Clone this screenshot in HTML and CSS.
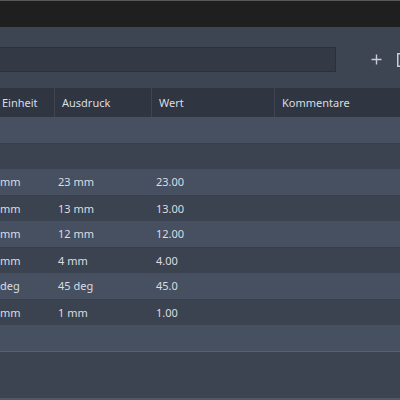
FILE: index.html
```html
<!DOCTYPE html>
<html>
<head>
<meta charset="utf-8">
<link rel="stylesheet" href="styles.css">
</head>
<body>
<div class="app">
  <div class="topline"></div>
  <div class="titlebar"></div>
  <div class="toolbar">
    <div class="search"></div>
    <div class="tools">
      <svg class="plus" width="11" height="11" viewBox="0 0 11 11"><path d="M5.5 0.5v10M0.5 5.5h10" stroke="#c9cdd3" stroke-width="1.4" fill="none"/></svg>
      <svg class="box" width="8" height="14" viewBox="0 0 8 14"><rect x="0.75" y="0.75" width="9" height="12.5" fill="none" stroke="#c9cdd3" stroke-width="1.5"/></svg>
    </div>
  </div>
  <div class="table">
    <div class="row head">
      <div class="c c1">Einheit</div>
      <div class="c c2">Ausdruck</div>
      <div class="c c3">Wert</div>
      <div class="c c4">Kommentare</div>
    </div>
    <div class="row light"><div class="c c1"></div><div class="c c2"></div><div class="c c3"></div><div class="c c4"></div></div>
    <div class="row dark"><div class="c c1"></div><div class="c c2"></div><div class="c c3"></div><div class="c c4"></div></div>
    <div class="row light"><div class="c c1">mm</div><div class="c c2">23 mm</div><div class="c c3">23.00</div><div class="c c4"></div></div>
    <div class="row dark"><div class="c c1">mm</div><div class="c c2">13 mm</div><div class="c c3">13.00</div><div class="c c4"></div></div>
    <div class="row light"><div class="c c1">mm</div><div class="c c2">12 mm</div><div class="c c3">12.00</div><div class="c c4"></div></div>
    <div class="row dark"><div class="c c1">mm</div><div class="c c2">4 mm</div><div class="c c3">4.00</div><div class="c c4"></div></div>
    <div class="row light"><div class="c c1">deg</div><div class="c c2">45 deg</div><div class="c c3">45.0</div><div class="c c4"></div></div>
    <div class="row dark"><div class="c c1">mm</div><div class="c c2">1 mm</div><div class="c c3">1.00</div><div class="c c4"></div></div>
    <div class="row light"><div class="c c1"></div><div class="c c2"></div><div class="c c3"></div><div class="c c4"></div></div>
  </div>
  <div class="rest"></div>
  <div class="scrollbar"></div>
</div>
</body>
</html>
```
FILE: styles.css
```css
html, body {
  margin: 0;
  padding: 0;
  width: 400px;
  height: 400px;
  overflow: hidden;
  background: #3c4351;
}
.app {
  width: 400px;
  height: 400px;
  display: flex;
  flex-direction: column;
  font-family: "Noto Sans", "Open Sans", sans-serif;
  font-size: 11px;
  color: #dadde2;
}
.topline {
  height: 1px;
  background: #585858;
}
.titlebar {
  height: 26px;
  background: #1f1f1f;
}
.toolbar {
  height: 61px;
  background: #3d4553;
  display: flex;
  align-items: flex-start;
  padding-top: 20px;
  box-sizing: border-box;
  overflow: hidden;
}
.search {
  flex: none;
  width: 336px;
  height: 25px;
  box-sizing: border-box;
  background: #333a46;
  border: 1px solid #2b313b;
  border-left: none;
}
.tools {
  flex: none;
  display: flex;
  align-items: center;
  height: 25px;
  padding-left: 35px;
  gap: 15px;
}
.plus { display: block; flex: none; }
.box { display: block; flex: none; }
.table {
  display: flex;
  flex-direction: column;
}
.row {
  display: grid;
  grid-template-columns: 55px 97px 123px 125px;
  height: 26px;
  align-items: center;
}
.row.head {
  height: 29px;
  background: #2f3541;
  align-items: stretch;
}
.row.light { background: #465061; }
.row.dark { background: #3b4351; border-top: 1px solid #38404d; box-sizing: border-box; }
.c {
  white-space: nowrap;
  overflow: hidden;
  line-height: 26px;
}
.c1 { padding-left: 0; }
.c2 { padding-left: 3px; }
.c3 { padding-left: 4px; }
.c4 { padding-left: 8px; }
.head .c {
  line-height: 29px;
  border-right: 1px solid #3f4653;
}
.head .c1 { padding-left: 2px; }
.head .c2 { padding-left: 7px; }
.head .c3 { padding-left: 7px; }
.head .c4 { border-right: none; padding-left: 7px; }
.rest {
  flex: 1;
  background: #3c4351;
  border-top: 1px solid #52607a;
}
.scrollbar {
  height: 2px;
  background: #505868;
}
```
